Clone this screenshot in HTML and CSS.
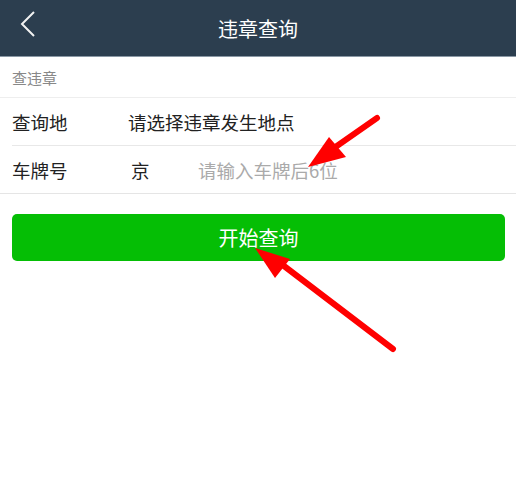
FILE: index.html
```html
<!DOCTYPE html>
<html lang="zh-CN">

<head>
    <meta charset="UTF-8">
    <meta name="viewport" content="width=device-width, initial-scale=1.0">
    <title>违章查询</title>
    <link rel="stylesheet" href="styles.css">
</head>

<body>

    <div class="screen">

        <header class="top-bar">
            <span class="back">
                <svg width="16" height="28" viewBox="0 0 16 28">
                    <polyline points="14,2 2,14 14,26" fill="none" stroke="#f2f2f2" stroke-width="2" />
                </svg>
            </span>
            <h1>违章查询</h1>
        </header>

        <div class="section-label">查违章</div>

        <div class="form">
            <div class="form-row">
                <span class="row-title">查询地</span>
                <span class="row-value">请选择违章发生地点</span>
            </div>
            <div class="form-row">
                <span class="row-title">车牌号</span>
                <span class="plate-prefix">京</span>
                <span class="placeholder">请输入车牌后6位</span>
            </div>
        </div>

        <div class="button-section">
            <button class="query-btn">开始查询</button>
        </div>

        <!-- rode pijlen over de pagina -->
        <svg class="arrows" width="516" height="479" viewBox="0 0 516 479">
            <line x1="377" y1="118" x2="334" y2="148" stroke="#ff0000" stroke-width="6" stroke-linecap="round" />
            <polygon points="308,167 329,137 346,157" fill="#ff0000" />
            <line x1="393" y1="349" x2="284" y2="266" stroke="#ff0000" stroke-width="6" stroke-linecap="round" />
            <polygon points="255,248 290,259 275,278" fill="#ff0000" />
        </svg>

    </div>

</body>

</html>
```

FILE: styles.css
```css
html,
body {
    margin: 0;
    padding: 0;
    box-sizing: border-box;
    height: 100%;
    overflow: hidden;
    font-family: "Noto Sans CJK SC", "Noto Sans", sans-serif;
    background: #fff;
}

.screen {
    position: relative;
    width: 516px;
    height: 479px;
}

.top-bar {
    display: flex;
    align-items: center;
    justify-content: center;
    position: relative;
    height: 56px;
    background-color: #2c3e4f;
    border-bottom: 1px solid #8a98a5;
}

.top-bar h1 {
    margin: 0;
    font-size: 20px;
    font-weight: normal;
    color: #fff;
}

.back {
    position: absolute;
    left: 20px;
    top: 10px;
    display: flex;
}

.section-label {
    display: flex;
    align-items: center;
    height: 40px;
    padding-left: 12px;
    font-size: 15px;
    color: #888;
    border-bottom: 1px solid #eee;
}

.form {
    border-bottom: 1px solid #e5e5e5;
}

.form-row {
    display: flex;
    align-items: center;
    height: 47px;
    margin-left: 12px;
    font-size: 18.5px;
    color: #222;
}

.form-row + .form-row {
    border-top: 1px solid #e8e8e8;
}

.row-title {
    width: 116px;
}

.plate-prefix {
    width: 67px;
    padding-left: 3px;
}

.placeholder {
    color: #aaa;
}

.button-section {
    padding: 20px 11px 0 12px;
}

.query-btn {
    display: block;
    width: 100%;
    height: 47px;
    border: none;
    border-radius: 5px;
    background-color: #05be05;
    color: #fff;
    font-family: inherit;
    font-size: 20px;
    padding: 0;
}

.arrows {
    position: absolute;
    left: 0;
    top: 0;
    pointer-events: none;
}
```
